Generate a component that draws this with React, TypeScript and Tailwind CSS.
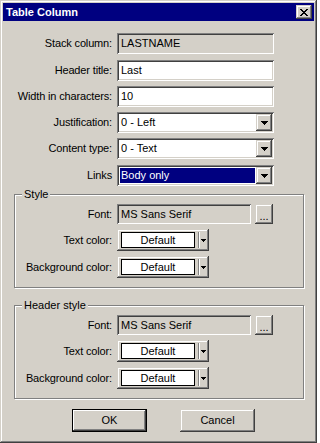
import React from "react";

// classic 3D bevels, Win2k palette
const SUNKEN =
  "shadow-[inset_1px_1px_#808080,inset_-1px_-1px_#ffffff,inset_2px_2px_#404040,inset_-2px_-2px_#d4d0c8]";
const RAISED =
  "shadow-[inset_-1px_-1px_#404040,inset_1px_1px_#d4d0c8,inset_-2px_-2px_#808080,inset_2px_2px_#ffffff]";

function DownArrow({ w = 7, h = 4 }: { w?: number; h?: number }) {
  return (
    <svg width={w} height={h} viewBox={`0 0 ${w} ${h}`} aria-hidden>
      <path d={`M0 0H${w}L${w / 2} ${h}Z`} fill="#000" shapeRendering="crispEdges" />
    </svg>
  );
}

function Label({ text, w }: { text: string; w: string }) {
  return <span className={`${w} shrink-0 pr-[5px] text-right tracking-[-0.15px]`}>{text}</span>;
}

function Edit({ value, readOnly }: { value: string; readOnly?: boolean }) {
  return (
    <div
      className={`flex h-[21px] w-[157px] items-center pl-[4px] ${SUNKEN} ${
        readOnly ? "bg-[#d4d0c8]" : "bg-white"
      }`}
    >
      {value}
    </div>
  );
}

function Combo({ value, selected }: { value: string; selected?: boolean }) {
  return (
    <div className={`flex h-[21px] w-[157px] items-center bg-white p-[2px] ${SUNKEN}`}>
      <div className="flex h-full flex-1 items-center px-[1px]">
        <span
          className={`flex h-[15px] flex-1 items-center pl-[1px] ${
            selected ? "bg-[#000080] text-white" : ""
          }`}
        >
          {value}
        </span>
      </div>
      <div className={`flex h-[17px] w-[16px] items-center justify-center bg-[#d4d0c8] ${RAISED}`}>
        <DownArrow />
      </div>
    </div>
  );
}

function ColorButton() {
  return (
    <div className={`flex h-[22px] w-[92px] items-center bg-[#d4d0c8] pl-[4px] ${RAISED}`}>
      <div className="flex h-[16px] w-[74px] items-center justify-center border border-black bg-white">
        Default
      </div>
      <div className="ml-[3px] h-[16px] w-[2px] border-l border-[#808080] bg-white" />
      <div className="ml-[1px] flex items-center">
        <DownArrow w={5} h={3} />
      </div>
    </div>
  );
}

function StyleGroup({ title, className }: { title: string; className: string }) {
  return (
    <div
      className={`relative mx-[11px] w-[290px] border border-[#808080] pb-[9px] shadow-[inset_1px_1px_#ffffff,1px_1px_#ffffff] ${className}`}
    >
      <span className="absolute -top-[7px] left-[7px] bg-[#d4d0c8] px-[2px] leading-[13px]">
        {title}
      </span>
      <div className="mt-[9px] flex items-center">
        <Label text="Font:" w="w-[102px]" />
        <div className={`flex h-[20px] w-[134px] items-center bg-[#d4d0c8] pl-[4px] ${SUNKEN}`}>
          MS Sans Serif
        </div>
        <div
          className={`ml-[4px] flex h-[20px] w-[18px] items-end justify-center bg-[#d4d0c8] pb-[4px] leading-[8px] ${RAISED}`}
        >
          ...
        </div>
      </div>
      <div className="mt-[5px] flex items-center">
        <Label text="Text color:" w="w-[102px]" />
        <ColorButton />
      </div>
      <div className="mt-[5px] flex items-center">
        <Label text="Background color:" w="w-[102px]" />
        <ColorButton />
      </div>
    </div>
  );
}

function PushButton({ text, isDefault, className }: { text: string; isDefault?: boolean; className: string }) {
  return (
    <div
      className={`flex h-[23px] w-[75px] items-center justify-center bg-[#d4d0c8] ${
        isDefault
          ? "border border-black shadow-[inset_-1px_-1px_#404040,inset_1px_1px_#ffffff,inset_-2px_-2px_#808080]"
          : RAISED
      } ${className}`}
    >
      {text}
    </div>
  );
}

export default function App() {
  return (
    <div
      className={`h-[443px] w-[317px] bg-[#d4d0c8] p-[3px] text-[11px] leading-[13px] text-black font-['Liberation_Sans',Arial,sans-serif] ${RAISED}`}
    >
      <div className="flex h-[18px] items-center justify-between bg-[#000080] pl-[3px] pr-[2px]">
        <span className="text-[11px] font-bold text-white">Table Column</span>
        <div className={`flex h-[14px] w-[16px] items-center justify-center bg-[#d4d0c8] ${RAISED}`}>
          <svg width="8" height="7" viewBox="0 0 8 7" aria-hidden>
            <path
              d="M0 0h2v1h1v1h2V1h1V0h2v1H7v1H6v1H5v1h1v1h1v1h1v1H6V6H5V5H3v1H2v1H0V6h1V5h1V4h1V3H2V2H1V1H0z"
              fill="#000"
              shapeRendering="crispEdges"
            />
          </svg>
        </div>
      </div>

      <div className="mt-[12px] flex items-center">
        <Label text="Stack column:" w="w-[114px]" />
        <Edit value="LASTNAME" readOnly />
      </div>
      <div className="mt-[6px] flex items-center">
        <Label text="Header title:" w="w-[114px]" />
        <Edit value="Last" />
      </div>
      <div className="mt-[5px] flex items-center">
        <Label text="Width in characters:" w="w-[114px]" />
        <Edit value="10" />
      </div>
      <div className="mt-[5px] flex items-center">
        <Label text="Justification:" w="w-[114px]" />
        <Combo value="0 - Left" />
      </div>
      <div className="mt-[5px] flex items-center">
        <Label text="Content type:" w="w-[114px]" />
        <Combo value="0 - Text" />
      </div>
      <div className="mt-[6px] flex items-center">
        <Label text="Links" w="w-[114px]" />
        <Combo value="Body only" selected />
      </div>

      <StyleGroup title="Style" className="mt-[8px]" />
      <StyleGroup title="Header style" className="mt-[17px]" />

      <div className="mt-[10px] flex">
        <PushButton text="OK" isDefault className="ml-[69px]" />
        <PushButton text="Cancel" className="ml-[33px]" />
      </div>
    </div>
  );
}
